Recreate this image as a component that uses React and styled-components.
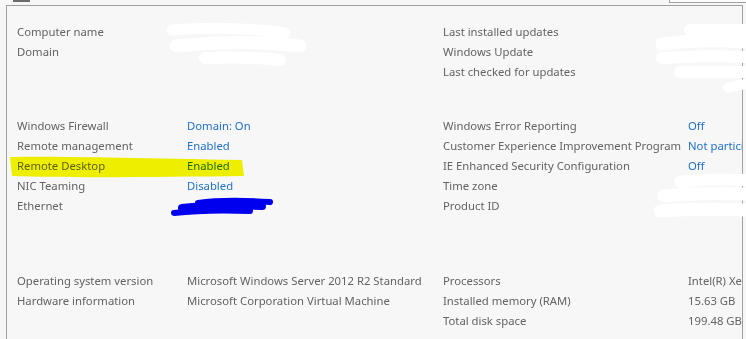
import styled, { createGlobalStyle } from "styled-components";

const Global = createGlobalStyle`
  html, body {
    margin: 0;
    padding: 0;
    background: #f7f7f7;
    overflow: hidden;
  }
  body {
    font-family: "Segoe UI", "Noto Sans", sans-serif;
  }
`;

const Page = styled.div`
  position: relative;
  width: 746px;
  height: 339px;
  background: #f7f7f7;
  overflow: hidden;
`;

const TopStrip = styled.div`
  height: 5px;
  display: flex;
  justify-content: space-between;
  align-items: flex-start;
`;

const Tab = styled.div`
  margin-left: 13px;
  width: 17px;
  height: 2px;
  background: #6b6b6b;
`;

const CornerBox = styled.div`
  width: 76px;
  height: 2px;
  border: 1px solid #a0a0a0;
  border-top: none;
  border-right: none;
  background: #fbfbfb;
`;

const Frame = styled.div`
  margin-left: 6px;
  width: 737px;
  height: 340px;
  border: 1px solid #a0a0a0;
  border-bottom: none;
  padding: 16px 0 0 10px;
  box-sizing: border-box;
  overflow: hidden;
`;

const Section = styled.div`
  display: grid;
  grid-template-columns: 170px 256px 245px 160px;
  margin-top: ${(p) => p.$gap || 0}px;
`;

const Cell = styled.div`
  height: 20px;
  line-height: 20px;
  font-size: 11.3px;
  white-space: nowrap;
  color: ${(p) => (p.$link ? "#2271c8" : "#636363")};
`;

const Marker = styled.svg`
  position: absolute;
  left: 10px;
  top: 154px;
  width: 240px;
  height: 26px;
  mix-blend-mode: multiply;
  pointer-events: none;
`;

const Scribble = styled.svg`
  position: absolute;
  left: 0;
  top: 0;
  width: 746px;
  height: 339px;
  pointer-events: none;
`;

const sections = [
  {
    gap: 0,
    rows: [
      ["Computer name", "", "Last installed updates", ""],
      ["Domain", "", "Windows Update", ""],
      ["", "", "Last checked for updates", ""],
    ],
  },
  {
    gap: 34,
    rows: [
      ["Windows Firewall", "Domain: On", "Windows Error Reporting", "Off"],
      ["Remote management", "Enabled", "Customer Experience Improvement Program", "Not participating"],
      ["Remote Desktop", "Enabled", "IE Enhanced Security Configuration", "Off"],
      ["NIC Teaming", "Disabled", "Time zone", ""],
      ["Ethernet", "", "Product ID", ""],
    ],
  },
  {
    gap: 55,
    plain: true,
    rows: [
      ["Operating system version", "Microsoft Windows Server 2012 R2 Standard", "Processors", "Intel(R) Xeon(R) CPU"],
      ["Hardware information", "Microsoft Corporation Virtual Machine", "Installed memory (RAM)", "15.63 GB"],
      ["", "", "Total disk space", "199.48 GB"],
    ],
  },
];

export default function App() {
  return (
    <Page>
      <Global />
      <TopStrip>
        <Tab />
        <CornerBox />
      </TopStrip>
      <Frame>
        {sections.map((s, i) => (
          <Section key={i} $gap={s.gap}>
            {s.rows.map((r, j) =>
              r.map((t, k) => (
                <Cell key={`${j}-${k}`} $link={!s.plain && k % 2 === 1}>
                  {t}
                </Cell>
              ))
            )}
          </Section>
        ))}
      </Frame>
      <Marker viewBox="0 0 240 26">
        <path d="M0 3 C40 2 120 4 232 6 L234 22 C150 23 60 24 2 22 Z" fill="#f6f600" />
      </Marker>
      <Scribble viewBox="0 0 746 339">
        <g stroke="#ffffff" strokeLinecap="round" fill="none">
          <path d="M172 30 C210 27 250 28 285 33" strokeWidth="11" />
          <path d="M176 46 C220 41 265 42 300 46" strokeWidth="13" />
          <path d="M205 58 C230 57 255 57 280 60" strokeWidth="12" />
          <path d="M690 30 L746 30" strokeWidth="12" />
          <path d="M662 44 C690 40 720 40 746 42" strokeWidth="13" />
          <path d="M662 58 C690 56 720 56 746 57" strokeWidth="12" />
          <path d="M680 72 L746 72" strokeWidth="12" />
          <path d="M728 88 L746 84" strokeWidth="10" />
          <path d="M680 182 C700 179 725 179 746 180" strokeWidth="12" />
          <path d="M664 196 C690 193 720 193 746 194" strokeWidth="13" />
          <path d="M660 211 C690 209 720 209 746 210" strokeWidth="13" />
        </g>
        <g stroke="#0000ee" strokeLinecap="round" fill="none">
          <path d="M198 203 C218 200 240 200 270 202" strokeWidth="6" />
          <path d="M182 208 C205 205 235 205 262 206" strokeWidth="8" />
          <path d="M174 213 C200 210 225 210 250 211" strokeWidth="6" />
        </g>
      </Scribble>
    </Page>
  );
}
